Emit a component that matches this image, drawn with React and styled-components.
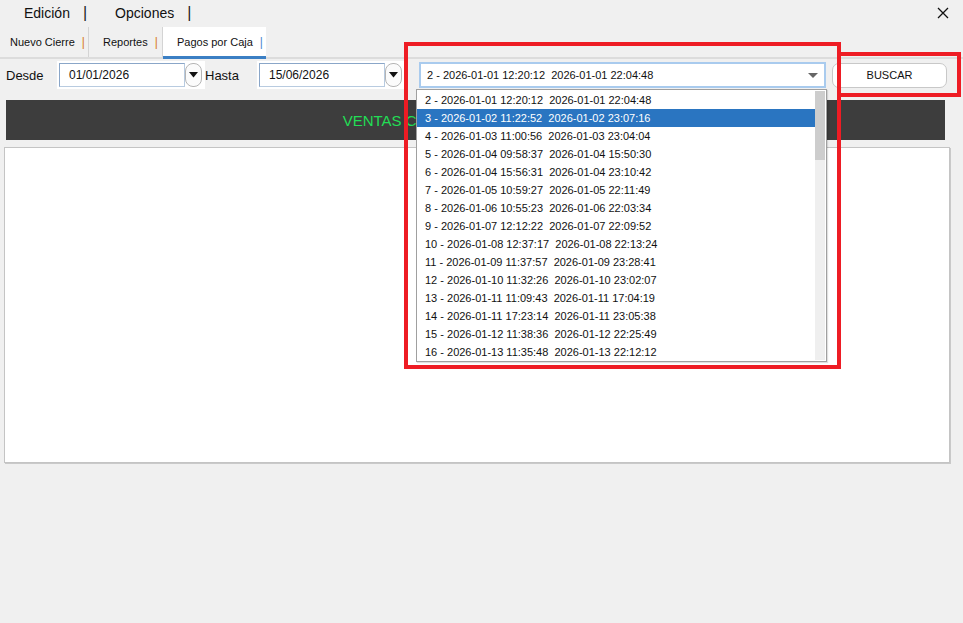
import React from "react";
import styled, { createGlobalStyle } from "styled-components";

const GlobalStyle = createGlobalStyle`
  body {
    margin: 0;
    background: #f0f0f0;
    font-family: "Liberation Sans", Arial, sans-serif;
  }
`;

const Page = styled.div`
  position: relative;
  width: 963px;
  height: 623px;
  background: #f0f0f0;
  overflow: hidden;
`;

const MenuBar = styled.div`
  display: flex;
  align-items: center;
  height: 26px;
  padding-left: 24px;
  font-size: 14px;
  color: #111;
`;

const MenuItem = styled.div`
  display: flex;
  align-items: center;
  margin-right: ${(p) => p.gap}px;
`;

const MenuSep = styled.span`
  margin-left: ${(p) => p.ml}px;
  font-size: 16px;
  color: #222;
`;

const CloseBtn = styled.div`
  margin-left: auto;
  width: 36px;
  height: 24px;
  display: flex;
  align-items: center;
  justify-content: center;
  margin-right: 2px;
`;

const TabBar = styled.div`
  display: flex;
  height: 30px;
  border-bottom: 2px solid #dcdcdc;
  margin-top: 1px;
`;

const Tab = styled.div`
  display: flex;
  align-items: center;
  box-sizing: border-box;
  width: ${(p) => p.w}px;
  padding-left: ${(p) => p.pl}px;
  font-size: 11px;
  color: #111;
  background: ${(p) => (p.active ? "#fff" : "transparent")};
  border-right: ${(p) => (p.active ? "none" : "1px solid #d4d4d4")};
  border-bottom: ${(p) => (p.active ? "3px solid #3b7fc4" : "none")};
  margin-bottom: ${(p) => (p.active ? "-2px" : "0")};
  height: ${(p) => (p.active ? "32px" : "30px")};
`;

const TabSep = styled.span`
  margin-left: 7px;
  color: ${(p) => (p.active ? "#4a8ad0" : "#d87a1e")};
  font-size: 12px;
`;

const FormRow = styled.div`
  display: flex;
  align-items: center;
  height: 28px;
  margin-top: 2px;
  padding-left: 6px;
`;

const Label = styled.span`
  font-size: 13px;
  color: #111;
  width: ${(p) => p.w}px;
`;

const DateWrap = styled.div`
  display: flex;
  align-items: center;
  background: #fff;
  height: 28px;
  padding: 0 3px 0 2px;
  box-sizing: border-box;
`;

const DateInput = styled.div`
  width: 126px;
  height: 24px;
  box-sizing: border-box;
  border: 1px solid;
  border-color: #8aa6c8 #b8cbe0 #b8cbe0 #8aa6c8;
  display: flex;
  align-items: center;
  padding-left: 9px;
  font-size: 12px;
  color: #111;
  background: #fff;
`;

const CircleBtn = styled.div`
  width: 17px;
  height: 24px;
  box-sizing: border-box;
  border: 1px solid #b5b5b5;
  border-radius: 8px;
  display: flex;
  align-items: center;
  justify-content: center;
  background: #fbfbfb;
`;

const Combo = styled.div`
  margin-left: 14px;
  width: 407px;
  height: 26px;
  box-sizing: border-box;
  border: 2px solid #a9cbee;
  background: #fff;
  display: flex;
  align-items: center;
  padding-left: 6px;
  padding-right: 6px;
  font-size: 11px;
  color: #111;
`;

const ComboArrow = styled.div`
  margin-left: auto;
  width: 0;
  height: 0;
  border-left: 5px solid transparent;
  border-right: 5px solid transparent;
  border-top: 5px solid #666;
`;

const SearchBtn = styled.div`
  margin-left: 6px;
  width: 115px;
  height: 25px;
  box-sizing: border-box;
  border: 1px solid #c8c8c8;
  border-radius: 7px;
  background: #fff;
  display: flex;
  align-items: center;
  justify-content: center;
  font-size: 11px;
  color: #111;
`;

const Banner = styled.div`
  margin: 11px 0 0 6px;
  width: 939px;
  height: 40px;
  background: #3d3d3d;
  display: flex;
  align-items: center;
  justify-content: center;
  font-size: 15px;
  color: #22dd55;
`;

const Panel = styled.div`
  margin: 7px 0 0 4px;
  width: 946px;
  height: 316px;
  box-sizing: border-box;
  background: #fff;
  border: 1px solid #c4c4c4;
  box-shadow: 1px 1px 0 #c9c9c9;
`;

const DropList = styled.div`
  position: absolute;
  left: 416px;
  top: 89px;
  width: 411px;
  height: 273px;
  box-sizing: border-box;
  background: #fff;
  border: 1px solid #a0a0a0;
  box-shadow: 1px 1px 1px rgba(0, 0, 0, 0.12);
  display: flex;
  padding: 1px 1px 1px 0;
`;

const Items = styled.div`
  flex: 1;
`;

const Item = styled.div`
  height: 18px;
  display: flex;
  align-items: center;
  padding-left: 8px;
  font-size: 11px;
  white-space: pre;
  color: ${(p) => (p.sel ? "#fff" : "#111")};
  background: ${(p) => (p.sel ? "#2a75c1" : "transparent")};
`;

const ScrollTrack = styled.div`
  width: 10px;
  background: #efefef;
`;

const ScrollThumb = styled.div`
  height: 69px;
  background: #cdcdcd;
`;

const Annot = styled.div`
  position: absolute;
  box-sizing: border-box;
  border: 4px solid #ee1c24;
  left: ${(p) => p.x}px;
  top: ${(p) => p.y}px;
  width: ${(p) => p.w}px;
  height: ${(p) => p.h}px;
`;

const items = [
  "2 - 2026-01-01 12:20:12  2026-01-01 22:04:48",
  "3 - 2026-01-02 11:22:52  2026-01-02 23:07:16",
  "4 - 2026-01-03 11:00:56  2026-01-03 23:04:04",
  "5 - 2026-01-04 09:58:37  2026-01-04 15:50:30",
  "6 - 2026-01-04 15:56:31  2026-01-04 23:10:42",
  "7 - 2026-01-05 10:59:27  2026-01-05 22:11:49",
  "8 - 2026-01-06 10:55:23  2026-01-06 22:03:34",
  "9 - 2026-01-07 12:12:22  2026-01-07 22:09:52",
  "10 - 2026-01-08 12:37:17  2026-01-08 22:13:24",
  "11 - 2026-01-09 11:37:57  2026-01-09 23:28:41",
  "12 - 2026-01-10 11:32:26  2026-01-10 23:02:07",
  "13 - 2026-01-11 11:09:43  2026-01-11 17:04:19",
  "14 - 2026-01-11 17:23:14  2026-01-11 23:05:38",
  "15 - 2026-01-12 11:38:36  2026-01-12 22:25:49",
  "16 - 2026-01-13 11:35:48  2026-01-13 22:12:12",
];

function DownTri() {
  return (
    <svg width="9" height="6" viewBox="0 0 9 6">
      <path d="M0 0 L9 0 L4.5 5.5 Z" fill="#111" />
    </svg>
  );
}

function DateField({ value }) {
  return (
    <DateWrap>
      <DateInput>{value}</DateInput>
      <CircleBtn>
        <DownTri />
      </CircleBtn>
    </DateWrap>
  );
}

export default function App() {
  return (
    <Page>
      <GlobalStyle />
      <MenuBar>
        <MenuItem gap={28}>
          Edición<MenuSep ml={13}>|</MenuSep>
        </MenuItem>
        <MenuItem gap={0}>
          Opciones<MenuSep ml={13}>|</MenuSep>
        </MenuItem>
        <CloseBtn>
          <svg width="12" height="12" viewBox="0 0 12 12">
            <path d="M1 1 L11 11 M11 1 L1 11" stroke="#111" strokeWidth="1.3" />
          </svg>
        </CloseBtn>
      </MenuBar>

      <TabBar>
        <Tab w={89} pl={10}>
          Nuevo Cierre<TabSep>|</TabSep>
        </Tab>
        <Tab w={74} pl={14}>
          Reportes<TabSep>|</TabSep>
        </Tab>
        <Tab w={103} pl={14} active>
          Pagos por Caja<TabSep active>|</TabSep>
        </Tab>
      </TabBar>

      <FormRow>
        <Label w={51}>Desde</Label>
        <DateField value="01/01/2026" />
        <Label w={52}>Hasta</Label>
        <DateField value="15/06/2026" />
        <Combo>
          2 - 2026-01-01 12:20:12&nbsp;&nbsp;2026-01-01 22:04:48
          <ComboArrow />
        </Combo>
        <SearchBtn>BUSCAR</SearchBtn>
      </FormRow>

      <Banner>VENTAS CAJA 2 - 2026-01-01 12:20:12</Banner>
      <Panel />

      <DropList>
        <Items>
          {items.map((t, i) => (
            <Item key={t} sel={i === 1}>
              {t}
            </Item>
          ))}
        </Items>
        <ScrollTrack>
          <ScrollThumb />
        </ScrollTrack>
      </DropList>

      <Annot x={404} y={42} w={437} h={327} />
      <Annot x={837} y={52} w={124} h={45} />
    </Page>
  );
}
